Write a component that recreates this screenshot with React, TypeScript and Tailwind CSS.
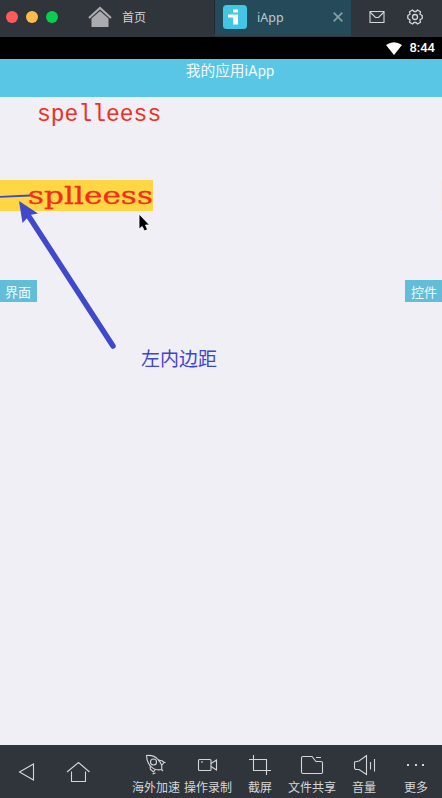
import React from "react";

const line = {
  fill: "none",
  stroke: "#d3d6d9",
  strokeWidth: 1.1,
} as const;

function Icon({ children, w = 24, h = 24, className = "" }: { children: React.ReactNode; w?: number; h?: number; className?: string }) {
  return (
    <svg width={w} height={h} viewBox={`0 0 ${w} ${h}`} className={`block shrink-0 ${className}`} {...line}>
      {children}
    </svg>
  );
}

const tools = [
  {
    label: "海外加速",
    icon: (
      <>
        <path d="M2.500 2.500C7 2 11.500 3.500 14 6.500C17 9.500 18.500 13 17.500 16.500C13.500 17.500 9 16 6 12.500C3.500 9.500 2.500 6.500 2.500 2.500Z" />
        <circle cx="9.500" cy="9" r="3" />
        <path d="M14.500 7L18.500 8L20 9.500L17.500 12.500M6 12.500L6.500 16.500L9.500 19L11.500 16M19 9L21.500 9.500M8.500 21L11.500 20M17.500 16.500L19 18" />
      </>
    ),
  },
  {
    label: "操作录制",
    icon: (
      <>
        <rect x="2.500" y="6.500" width="12.500" height="11" rx="1" />
        <path d="M15 10.500L20.500 7V17L15 13.500M5 9H7" />
      </>
    ),
  },
  {
    label: "截屏",
    icon: <path d="M5.500 2V17.500H23M1 6.500H18.500V22" />,
  },
  {
    label: "文件共享",
    icon: <path d="M16 4.500H21M12 3.500H3Q1.500 3.500 1.500 5V19Q1.500 20.500 3 20.500H21.500Q22.500 20.500 22.500 19V10Q22.500 8.500 21 8.500H16L12 3.500Z" />,
  },
  {
    label: "音量",
    icon: <path d="M2.500 9L7 8L14.500 2.500V21.500L7 16.500H3.500L2.500 15V9ZM18.500 9V16.500M22.500 6V18.500" />,
  },
  {
    label: "更多",
    icon: (
      <g fill="#d3d6d9" stroke="none">
        <rect x="3" y="11" width="2" height="2" />
        <rect x="11" y="11" width="2" height="2" />
        <rect x="18" y="11" width="2" height="2" />
      </g>
    ),
  },
];

function TitleBar() {
  return (
    <header className="flex h-[37px] shrink-0 items-start bg-[#30343b]">
      <div className="flex h-[34px] w-[215px] items-center border-r border-[#20252b] pl-[6px]">
        <div className="flex gap-2">
          <span className="size-3 rounded-full bg-[#ff5b5d]" />
          <span className="size-3 rounded-full bg-[#ffbc4a]" />
          <span className="size-3 rounded-full bg-[#07cf50]" />
        </div>
        <svg width="24" height="22" viewBox="0 0 24 22" className="ml-[30px]">
          <path d="M1 12L12 2L23 12" fill="none" stroke="#a9abaf" strokeWidth="2.200" />
          <path d="M3.500 12.500L12 5L20.500 12.500V21H3.500Z" fill="#a9abaf" />
        </svg>
        <span className="ml-[10px] mt-[2px] text-[12px] leading-4 text-[#d2d4d6]">首页</span>
      </div>
      <div className="flex h-[36px] w-[136px] items-center bg-[#254b5a] pb-[2px] pl-2">
        <svg width="24" height="24" viewBox="0 0 24 24">
          <rect width="24" height="24" rx="3.500" fill="#43c5e5" />
          <path d="M10 4.500H15V7.500H10ZM5 9.500H15V19.500H10V12.500H5Z" fill="#fff" />
        </svg>
        <span className="ml-[10px] mt-px text-[12.500px] leading-4 text-[#b8cbd1]">iApp</span>
        <svg width="10" height="10" viewBox="0 0 10 10" className="ml-auto mr-[8px]">
          <path d="M.7.7L9.300 9.300M9.300.7L.7 9.300" stroke="#8b9da5" strokeWidth="1.700" />
        </svg>
      </div>
      <div className="flex h-[34px] items-center pl-[18px]">
        <Icon w={16} h={12}>
          <rect x="1" y=".5" width="14" height="11" />
          <path d="M1 1L6.500 6.500H9.500L15 1" />
        </Icon>
        <Icon w={16} h={16} className="ml-[22px]">
          <path d="M5.500 1L7 2.500H9L10.500 1L13.500 2.800L13 5.200L15.200 6.500V9.500L13 10.800L13.500 13.200L10.500 15L9 13.500H7L5.500 15L2.500 13.200L3 10.800L.8 9.500V6.500L3 5.200L2.500 2.800Z" strokeLinejoin="round" strokeWidth="1.300" />
          <circle cx="8" cy="8" r="2.500" strokeWidth="1.300" />
        </Icon>
      </div>
    </header>
  );
}

function StatusBar() {
  return (
    <div className="flex h-[22px] shrink-0 items-center justify-end bg-black pr-[7px] text-white">
      <svg width="16" height="13" viewBox="0 0 16 13">
        <path d="M0 3Q8-2.500 16 3L8 13Z" fill="#fff" />
      </svg>
      <span className="ml-[7px] font-['Roboto',sans-serif] text-[13px] font-medium leading-4">8:44</span>
    </div>
  );
}

function Annotation() {
  return (
    <svg width="160" height="180" viewBox="0 170 160 180" className="absolute left-0 top-[170px]">
      <path d="M0 196.800L30 195.500" stroke="#4048c8" strokeWidth="1.800" />
      <path d="M26 212L113 346" stroke="#4048cc" strokeWidth="5.500" strokeLinecap="round" />
      <path d="M19 201L38 213.500L30 215L22.500 223Z" fill="#4048cc" />
      <path d="M139 214V229L142.200 226.500L144.500 231L147.500 229.500L145.500 225H149.500Z" fill="#000" stroke="#fff" strokeWidth=".8" />
    </svg>
  );
}

function NavBar() {
  return (
    <footer className="flex h-[53px] shrink-0 bg-[#30353b]">
      <div className="flex w-[130px] items-center pl-[18px]">
        <Icon w={18} h={20}>
          <path d="M1.500 10L15.500 2V18Z" />
        </Icon>
        <Icon w={24} h={22} className="ml-[30px]">
          <path d="M1 11L12.500 1.500L23.500 11M5.500 10.500V20.500H19.500V10.500" />
        </Icon>
      </div>
      {tools.map(({ label, icon }) => (
        <div key={label} className="flex w-[52px] flex-col items-center pt-2">
          <Icon>{icon}</Icon>
          <span className="mt-[3px] whitespace-nowrap text-[12px] leading-4 text-[#d5d8da]">{label}</span>
        </div>
      ))}
    </footer>
  );
}

export default function App() {
  return (
    <div className="relative flex h-[798px] w-[442px] flex-col overflow-hidden bg-[#f0eff5] font-['Noto_Sans','Noto_Sans_CJK_SC',sans-serif]">
      <TitleBar />
      <StatusBar />
      <div className="flex h-[38px] shrink-0 justify-center bg-[#59c6e6] pl-[18px] pt-[2px] font-['Roboto','Noto_Sans_CJK_SC',sans-serif] text-[14.700px] leading-[20px] text-[#f0fbff]">
        我的应用iApp
      </div>
      <main className="flex min-h-0 flex-1 flex-col">
        <div className="h-[83px] pl-[37px] pt-[4px] font-['Liberation_Mono',monospace] text-[23px] leading-[28px] text-[#ef3022]">
          spelleess
        </div>
        <div className="flex h-[31px] justify-between">
          <div className="w-[153px] bg-[#ffd745] pl-[28px]">
            <span className="inline-block origin-left scale-x-[1.300] font-['DejaVu_Serif',serif] text-[24px] leading-[33px] text-[#f52c18] [-webkit-text-stroke:0.300px_#f52c18]">splleess</span>
          </div>
          <div className="w-px bg-[#f9e9d9]" />
        </div>
        <div className="mt-[69px] flex justify-between text-[13px] leading-[22px] text-[#effbff]">
          <span className="h-[22px] w-[37px] bg-[#62bdd8] pl-[5px] pt-px">界面</span>
          <span className="h-[22px] w-[37px] bg-[#62bdd8] pl-[6px] pt-px">控件</span>
        </div>
        <p className="ml-[141px] mt-[43px] text-[19px] leading-[28px] text-[#4045cd]">左内边距</p>
      </main>
      <NavBar />
      <Annotation />
    </div>
  );
}
